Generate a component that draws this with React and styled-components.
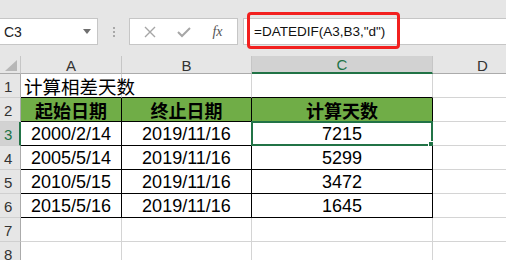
import React from 'react'
import styled, { createGlobalStyle } from 'styled-components'

const GlobalStyle = createGlobalStyle`
  html, body { margin: 0; padding: 0; background: #e6e6e6; overflow: hidden; }
  body { font-family: "Liberation Sans", "Noto Sans CJK SC", sans-serif; }
`

const Page = styled.div`
  width: 506px;
  height: 260px;
  overflow: hidden;
  background: #e6e6e6;
`

const Toolbar = styled.div`
  display: flex;
  align-items: stretch;
  height: 27px;
  padding: 18px 0 11px 0;
`

const NameBox = styled.div`
  width: 98px;
  box-sizing: border-box;
  background: #fff;
  border: 1px solid #c6c6c6;
  border-left: none;
  display: flex;
  align-items: center;
  justify-content: space-between;
  padding: 0 6px 0 4px;
  font-size: 14px;
  color: #222;
`

const Caret = styled.span`
  width: 0;
  height: 0;
  border-left: 4px solid transparent;
  border-right: 4px solid transparent;
  border-top: 5px solid #6f6f6f;
`

const Grip = styled.div`
  width: 31px;
  display: flex;
  flex-direction: column;
  align-items: center;
  justify-content: center;
  gap: 2px;
  span {
    width: 2px;
    height: 2px;
    background: #a8a8a8;
  }
`

const FxBox = styled.div`
  width: 109px;
  box-sizing: border-box;
  background: #fff;
  border: 1px solid #c6c6c6;
  display: flex;
  align-items: center;
  justify-content: space-around;
  padding: 0 4px;
`

const FxLabel = styled.span`
  font-family: "Liberation Serif", serif;
  font-style: italic;
  font-size: 14px;
  color: #555;
`

const Formula = styled.div`
  position: relative;
  flex: 1;
  margin-left: 5px;
  margin-right: -2px;
  box-sizing: border-box;
  background: #fff;
  border: 1px solid #c6c6c6;
  display: flex;
  align-items: center;
  padding-left: 10px;
  font-size: 13.5px;
  color: #111;
`

const RedMark = styled.div`
  position: absolute;
  left: 3px;
  top: -7px;
  width: 153px;
  height: 37px;
  box-sizing: border-box;
  border: 3px solid #f2201f;
  border-radius: 4px;
`

const Sheet = styled.div`
  display: grid;
  grid-template-columns: 21px 101px 130px 181px 100px;
  grid-template-rows: 18px repeat(8, 24px);
  background: #fff;
`

const ColHead = styled.div`
  box-sizing: border-box;
  background: ${p => (p.$active ? '#d2d2d2' : '#e6e6e6')};
  border-right: 1px solid #c6c6c6;
  border-bottom: ${p => (p.$active ? '2px solid #217346' : '1px solid #ababab')};
  display: flex;
  align-items: center;
  justify-content: center;
  padding-top: 1px;
  font-size: 15px;
  color: ${p => (p.$active ? '#217346' : '#333')};
`

const Corner = styled.div`
  position: relative;
  box-sizing: border-box;
  background: #e6e6e6;
  border-right: 1px solid #c6c6c6;
  border-bottom: 1px solid #ababab;
  svg { position: absolute; right: 3px; bottom: 2px; }
`

const RowHead = styled.div`
  box-sizing: border-box;
  background: ${p => (p.$active ? '#d2d2d2' : '#e6e6e6')};
  border-right: ${p => (p.$active ? '2px solid #217346' : '1px solid #ababab')};
  border-bottom: 1px solid #d0d0d0;
  display: flex;
  align-items: center;
  padding-left: 4px;
  padding-top: 2px;
  font-size: 15px;
  color: ${p => (p.$active ? '#217346' : '#333')};
`

const Cell = styled.div`
  position: relative;
  z-index: ${p => (p.$over ? 1 : 'auto')};
  box-sizing: border-box;
  background: ${p => (p.$fill ? '#70ad47' : '#fff')};
  border-right: 1px solid ${p => p.$right || '#d4d4d4'};
  border-bottom: 1px solid ${p => p.$bottom || '#d4d4d4'};
  display: flex;
  align-items: center;
  justify-content: ${p => (p.$left ? 'flex-start' : 'center')};
  padding-left: ${p => (p.$left ? '3px' : '0')};
  padding-top: 1px;
  font-size: ${p => (p.$left ? '18.5px' : '18px')};
  font-weight: ${p => (p.$bold ? 700 : 400)};
  color: #000;
  white-space: nowrap;
`

const Selection = styled.div`
  position: absolute;
  left: -1px;
  top: -1px;
  right: -1px;
  bottom: -1px;
  border: 2px solid #217346;
  pointer-events: none;
  &::after {
    content: '';
    position: absolute;
    right: -4px;
    bottom: -4px;
    width: 5px;
    height: 5px;
    background: #217346;
    border: 1px solid #fff;
  }
`

const cols = ['A', 'B', 'C', 'D']

const rows = [
  ['2000/2/14', '2019/11/16', '7215'],
  ['2005/5/14', '2019/11/16', '5299'],
  ['2010/5/15', '2019/11/16', '3472'],
  ['2015/5/16', '2019/11/16', '1645'],
]

export default function App() {
  const black = '#000'
  return (
    <Page>
      <GlobalStyle />
      <Toolbar>
        <NameBox>
          C3
          <Caret />
        </NameBox>
        <Grip>
          <span />
          <span />
          <span />
        </Grip>
        <FxBox>
          <svg width="12" height="12" viewBox="0 0 12 12">
            <path d="M1 1 L11 11 M11 1 L1 11" stroke="#a6a6a6" strokeWidth="1.4" fill="none" />
          </svg>
          <svg width="14" height="12" viewBox="0 0 14 12">
            <path d="M1 6 L5 10 L13 2" stroke="#a6a6a6" strokeWidth="2" fill="none" />
          </svg>
          <FxLabel>fx</FxLabel>
        </FxBox>
        <Formula>
          =DATEDIF(A3,B3,"d")
          <RedMark />
        </Formula>
      </Toolbar>

      <Sheet>
        <Corner>
          <svg width="12" height="11" viewBox="0 0 12 11">
            <path d="M12 0 L12 11 L0 11 Z" fill="#b7b7b7" />
          </svg>
        </Corner>
        {cols.map(c => (
          <ColHead key={c} $active={c === 'C'}>{c}</ColHead>
        ))}

        <RowHead>1</RowHead>
        <Cell $left $over $bottom={black}>计算相差天数</Cell>
        <Cell $bottom={black} />
        <Cell $bottom={black} />
        <Cell />

        <RowHead>2</RowHead>
        <Cell $fill $bold $right={black} $bottom={black}>起始日期</Cell>
        <Cell $fill $bold $right={black} $bottom={black}>终止日期</Cell>
        <Cell $fill $bold $right={black} $bottom={black}>计算天数</Cell>
        <Cell />

        {rows.map((r, i) => (
          <React.Fragment key={i}>
            <RowHead $active={i === 0}>{i + 3}</RowHead>
            <Cell $right={black} $bottom={black}>{r[0]}</Cell>
            <Cell $right={black} $bottom={black}>{r[1]}</Cell>
            <Cell $right={black} $bottom={black}>
              {r[2]}
              {i === 0 && <Selection />}
            </Cell>
            <Cell />
          </React.Fragment>
        ))}

        {[7, 8].map(n => (
          <React.Fragment key={n}>
            <RowHead>{n}</RowHead>
            <Cell />
            <Cell />
            <Cell />
            <Cell />
          </React.Fragment>
        ))}
      </Sheet>
    </Page>
  )
}
